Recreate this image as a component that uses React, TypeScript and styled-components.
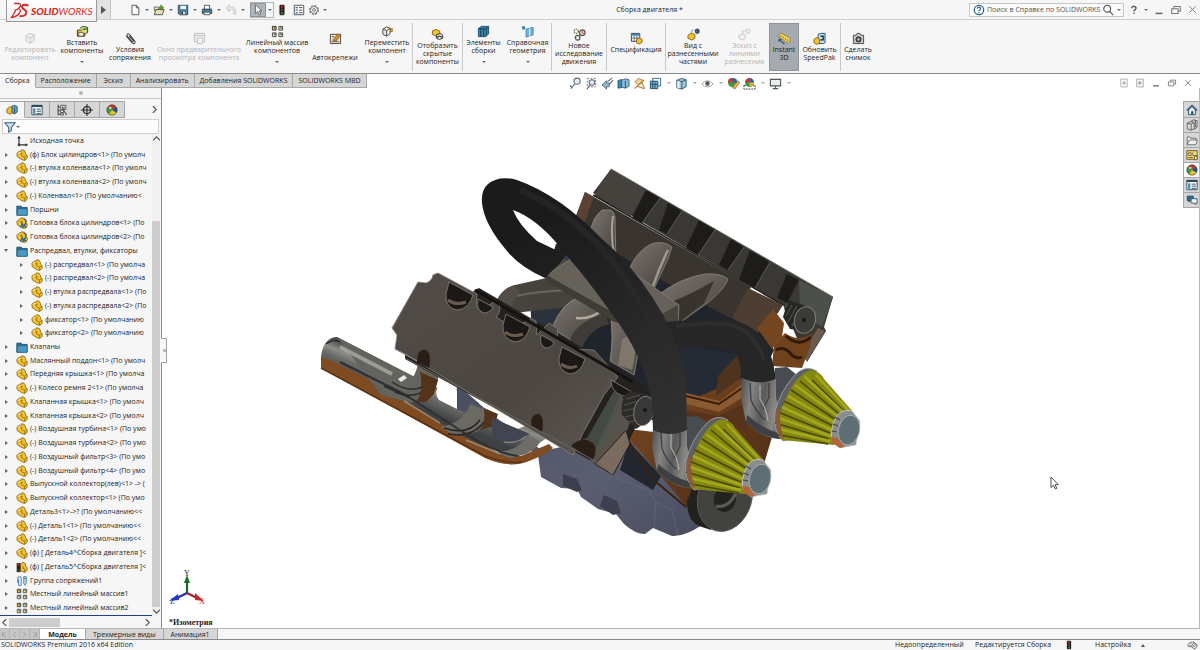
import React from 'react';
import styled, { createGlobalStyle } from 'styled-components';

const FONT = '"Open Sans", "Noto Sans", sans-serif';
const INK = '#1c1c1c';
const PANEL = '#f6f6f6';
const TAB = '#d6d6d6';
const LINE = '#a6a6a6';

const Global = createGlobalStyle`
  * { box-sizing: border-box; }
  body { margin: 0; font-family: ${FONT}; font-size: 7px; line-height: 8px; color: ${INK}; background: #fff; }
  button, input { font: inherit; color: inherit; margin: 0; padding: 0; border: 0; background: none; }
  svg { display: block; flex: none; }
`;

/* ---------- icons ---------- */

const Y = '#f2c230';
const YD = '#8a6410';
const B = '#3f86ad';
const BD = '#1d4f6e';

const glyphs: Record<string, React.ReactNode> = {
  newDoc: <path d="M3.5 1.5h5l3 3v8h-8zM8.5 1.5v3h3" fill="#fff" stroke="#444" />,
  open: (
    <>
      <path d="M1.500 3.500h4l1 1h5v3h-10z" fill="#f3ecc0" stroke="#555" />
      <path d="M1.500 12.500l2-6h9.500l-2 6z" fill="#e9e2b0" stroke="#444" />
      <path d="M6 6c0-2 1-3 3-3V1l3.500 3L9 7V5C8 5 7 5 6 6z" fill="#5aa02c" stroke="#2f6b12" strokeWidth=".5" />
    </>
  ),
  save: (
    <>
      <path d="M1.500 1.500h11v11h-9.500l-1.500-1.500z" fill={B} stroke="#26435a" />
      <path d="M4 2h6.500v4H4z" fill="#f4f4f4" />
      <path d="M4 8.500h6v4H4z" fill="#ddd" stroke="#333" strokeWidth=".6" />
      <path d="M5 9h2v3H5z" fill="#333" />
    </>
  ),
  print: (
    <>
      <path d="M4 1.500h6v5H4z" fill="#fff" stroke="#444" />
      <path d="M1.500 6h11v5h-11z" fill="#4b7f9e" stroke="#2c4050" />
      <path d="M3.500 9.500h7v3h-7z" fill="#fff" stroke="#444" />
    </>
  ),
  undo: <path d="M1 5l4-4v2.500h3c3 0 4.500 2 4.500 5.500V12h-2.500V9.500C10 7.500 9.500 6.500 8 6.500H5V9z" fill="#e4e4e4" stroke="#c8c8c8" />,
  cursor: <path d="M4 1v10l2.500-2.400 2 4.200 1.700-.8-2-4h3.300z" fill="#fff" stroke="#444" strokeWidth=".8" />,
  lights: (
    <>
      <rect x="4" y="1" width="6" height="12" rx="1.500" fill="#222" />
      <circle cx="7" cy="3.300" r="1.600" fill="#a3281c" />
      <circle cx="7" cy="7" r="1.600" fill="#6a3a16" />
      <circle cx="7" cy="10.700" r="1.600" fill="#2f6e30" />
    </>
  ),
  list: (
    <>
      <path d="M1.500 1.500h11v11h-11z" fill="#fff" stroke="#444" />
      <path d="M3 3.500h2.500v1.500H3zM3 6.500h2.500V8H3zM3 9.500h2.500V11H3z" fill="#2d5f87" />
      <path d="M7 4.200h4M7 7.200h4M7 10.200h4" stroke="#333" />
    </>
  ),
  gear: (
    <>
      <circle cx="7" cy="7" r="5" fill="none" stroke="#666" strokeWidth="1.600" strokeDasharray="2.400 1.500" />
      <circle cx="7" cy="7" r="4" fill="#fafafa" stroke="#666" strokeWidth=".8" />
      <circle cx="7" cy="7" r="1.700" fill="none" stroke="#666" />
    </>
  ),
  help: (
    <>
      <circle cx="7" cy="7" r="5.500" fill="#fff" stroke="#2d6388" strokeWidth="1.400" />
      <path d="M5.200 5.500c0-2.600 3.900-2.300 3.700 0C8.800 6.800 7 6.800 7 8.500M7 9.700v1.400" fill="none" stroke="#2d6388" strokeWidth="1.400" />
    </>
  ),
  search: <path d="M10 5.500a4 4 0 1 1-8 0 4 4 0 0 1 8 0zM9 8.500l4 4.500" fill="none" stroke="#555" strokeWidth="1.300" />,
  question: <path d="M4 4.500c0-3.600 6-3.400 5.800 0C9.600 6.500 7 6.500 7 9M7 10.700v2" fill="none" stroke="#555" strokeWidth="2" />,
  min: <path d="M3 11h8" stroke="#666" strokeWidth="1.800" />,
  restore: <path d="M2 5.500h7.500V11H2zM4.500 5V3h7.500v5.500h-2" fill="none" stroke="#777" strokeWidth="1.200" />,
  close: <path d="M3 3l8 8M11 3l-8 8" stroke="#777" strokeWidth="1.200" />,
  dockL: <path d="M2.500 1.500h9v11h-9zM5 7h5M5 7l3-2.500v5z" fill="none" stroke="#999" />,
  dockR: <path d="M2.500 1.500h9v11h-9zM4 7h5M9 7L6 4.500v5z" fill="none" stroke="#888" />,
  editPart: (
    <>
      <path d="M2 4l4-2.500 5 1.500v6l-4.500 3.500L2 9.500z" fill="#ececec" stroke="#c6c6c6" />
      <path d="M4 5.500l3 1 4-3M7 6.500v5.500" stroke="#c6c6c6" fill="none" />
    </>
  ),
  insertPart: (
    <>
      <path d="M1.500 5.500h8v6.500h-8z" fill={Y} stroke="#333" />
      <path d="M3 8h5v4H3z" fill="#fff6cc" stroke="#333" strokeWidth=".7" />
      <path d="M4 4l3-2.500 5.500 1V8L10 9.500" fill="#cfe08a" stroke="#333" />
      <path d="M7 4.500h5" stroke="#4d7a1c" strokeWidth="1.500" />
    </>
  ),
  clip: <path d="M2.500 4.500l6.500 7.500c1.800 1.600 4-.4 2.600-2.200L5.800 2.600C4.300 1 2.300 2.800 3.600 4.400l5 5.800c1 .8 2-.1 1.300-1.100L5.800 4.500" fill="none" stroke="#444" strokeWidth="1.100" />,
  preview: (
    <>
      <path d="M1.500 1.500h11v9h-11zM1.500 4h11" fill="#efefef" stroke="#bdbdbd" />
      <path d="M5 6.500h5v6H5z" fill="#f8f8f8" stroke="#bdbdbd" />
    </>
  ),
  pattern: (
    <>
      <path d="M1.500 1.500h4v4h-4z" fill={Y} stroke="#333" />
      <path d="M8.500 1.500h4v4h-4zM1.500 8.500h4v4h-4zM8.500 8.500h4v4h-4z" fill="#e6e3b4" stroke="#444" />
      <path d="M3.500 1.500v2h2M10.500 1.500v2h2M3.500 8.500v2h2M10.500 8.500v2h2" fill="none" stroke="#444" strokeWidth=".8" />
    </>
  ),
  fasteners: (
    <>
      <path d="M1.500 2.500h11v10h-11z" fill="#eee2cf" stroke="#444" />
      <path d="M4 9l5.500-7 3 1.500L8 9.500z" fill="#d98d2d" stroke="#7a4a12" strokeWidth=".7" />
      <path d="M3 10.500h8M3 5h2.500" stroke="#555" />
    </>
  ),
  move: (
    <>
      <path d="M2 4.500l4-2.500 4 1.500V9l-4 3-4-2z" fill="#f1ebdc" stroke="#444" />
      <path d="M2 4.500l4 1.500 4-2.500M6 6v6" fill="none" stroke="#444" />
      <path d="M8 5c2-2 4-1 4 2M12 3.500V7H9" fill="none" stroke="#a5761d" strokeWidth="1.200" />
    </>
  ),
  showHidden: (
    <>
      <path d="M1.500 3l4-1.500 4 2v3l-4 2.500-4-2z" fill={Y} stroke={YD} />
      <path d="M6 7l4-1 2.500 1.500v3.500L9 12.500 6 11z" fill="#d9d9d9" stroke="#333" />
      <path d="M6 10.500c2-2 4.500-2 6.500 0" fill="none" stroke="#111" />
    </>
  ),
  features: (
    <>
      <path d="M1.500 4l3-2.500h8v8l-3 3h-8z" fill={B} stroke={BD} />
      <path d="M4 4.500v8M7 4.500v8M10 4v8M1.500 4h8l3-2.500" fill="none" stroke="#123950" />
    </>
  ),
  refGeom: (
    <>
      <path d="M5.500 4.500l7.500-2v8l-7.500 2.500z" fill="#76b4d6" stroke={B} />
      <path d="M9.300 3.500v8.500" stroke="#fff" />
      <circle cx="2.800" cy="3" r="2" fill={B} />
    </>
  ),
  motion: (
    <>
      <circle cx="3.500" cy="3.500" r="2.300" fill="none" stroke="#775" strokeWidth="1.300" strokeDasharray="1.500 .8" />
      <circle cx="10" cy="5" r="3" fill="#f1d9c0" stroke="#555" strokeWidth="1.300" />
      <circle cx="5" cy="10.500" r="2.500" fill="#f4f4f4" stroke="#555" strokeWidth="1.300" />
      <path d="M10 3v2l1.500 1" fill="none" stroke="#a33" />
    </>
  ),
  bom: (
    <>
      <path d="M1.500 1.500h9v8.500h-9z" fill="#fff" stroke="#335" />
      <path d="M1.500 2h9v2h-9z" fill={B} />
      <path d="M1.500 6.500h9M4.500 4v6M7.500 4v6" stroke="#567" />
      <path d="M7 8l3-1.500 3 1.500v3l-3 2-3-1.500z" fill={Y} stroke={YD} />
    </>
  ),
  explode: (
    <>
      <path d="M1 8l3.500-2.500L8.500 7v4l-3.500 2-4-2z" fill={Y} stroke={YD} />
      <path d="M9 2l2-1 2 1v3l-2 1-2-1z" fill="#44638c" stroke="#223" strokeWidth=".8" />
      <path d="M5 5V2.500h3" fill="none" stroke="#777" strokeDasharray="1.500 1" />
    </>
  ),
  explodeLine: (
    <>
      <path d="M1 8l3.500-2L8 7.500V11l-3 2-4-2z" fill="#eee" stroke="#c8c8c8" />
      <path d="M9 2l2-1 2 1v3l-2 1-2-1zM5 6V3h3" fill="#eee" stroke="#c8c8c8" />
    </>
  ),
  instant3d: (
    <>
      <path d="M1 2.500L3 1l10 5.500v4L11 12 1 5.500z" fill="#f3d45c" stroke="#7f6a1a" strokeWidth=".7" />
      <path d="M3 3.500v2M5.500 5v2M8 6.500v2M10.500 8v2" stroke="#7f6a1a" />
      <path d="M1 8l6 5M1 8v2.500M1 8h2.500" stroke="#1f5d80" strokeWidth="1.300" fill="none" />
    </>
  ),
  speedpak: (
    <>
      <path d="M5.500 2.500L8 1.500h5v10l-2 1H5.500z" fill="#c3dbe8" stroke={BD} />
      <path d="M8 4.500h3v4H8" fill="none" stroke="#123" strokeWidth="1.300" />
      <path d="M1 8l3-2 3 2v3.500l-3 2-3-2z" fill={Y} stroke={YD} />
    </>
  ),
  camera: (
    <>
      <path d="M1.500 3.500h3l1-2h3l1 2h3v9h-11z" fill="#c9c9c9" stroke="#444" />
      <circle cx="7" cy="8" r="2.800" fill="#666" stroke="#222" />
      <circle cx="7" cy="8" r="1.100" fill="#ddd" />
    </>
  ),
  zoomFit: <path d="M12 4.500a3.300 3.300 0 1 1-6.600 0 3.300 3.300 0 0 1 6.600 0zM6.500 7L2 12.500M1 9l2.500 3" fill="#e4f0f6" stroke="#567" strokeWidth="1.100" />,
  zoomArea: (
    <>
      <path d="M2.500 1.500h9v9h-9z" fill="none" stroke="#777" strokeDasharray="2 1.500" />
      <path d="M10.500 6a3 3 0 1 1-6 0 3 3 0 0 1 6 0zM5.500 8.500L2 13" fill="#dceaf2" stroke="#667" strokeWidth="1.100" />
    </>
  ),
  prevView: (
    <>
      <path d="M1 8.500L6 4v2.500h3v4H6V13z" fill="#8fb8cc" stroke="#456" strokeWidth=".8" />
      <path d="M7 5l5-4M9 8l4-5" stroke="#667" strokeWidth="1.200" />
    </>
  ),
  section: (
    <>
      <path d="M1 4l4-1.500v9L1 12z" fill={B} stroke={BD} strokeWidth=".8" />
      <path d="M5 3.500l4-1.500 4 1v7l-4 2-4-1z" fill="#8bbdd6" stroke={BD} strokeWidth=".8" />
      <path d="M9 4v8" stroke={BD} />
    </>
  ),
  dynView: (
    <>
      <path d="M2 5l4-3.500 4 1.500v3L6 9z" fill="#efcf91" stroke="#a0711f" strokeWidth=".8" />
      <path d="M1.500 12.500L12 3M9 5l3.500 7.500M4 10l8 2.500" stroke="#b27a2a" strokeWidth="1.100" fill="none" />
    </>
  ),
  orient: (
    <>
      <path d="M1.500 4.500h8v8h-8z" fill="#76aecb" stroke={BD} />
      <path d="M4 4.500v-3h8.500v8h-3M4 4.500v8M6.500 4.500v8M1.500 8h8" fill="none" stroke={BD} strokeWidth=".9" />
    </>
  ),
  style: (
    <>
      <path d="M2 3.500l5-2 5 1.500v7.500L7.500 13 2 11.500z" fill="#9cc9df" stroke="#356" />
      <path d="M2 3.500l5.500 1.500L12 3M7.500 5v8" fill="none" stroke="#356" />
      <path d="M2.500 4l2.500.7v7.500l-2.500-.7z" fill="#e6f2f8" />
    </>
  ),
  eye: (
    <>
      <path d="M1 7.500c3-4.500 9-4.500 12 0-3 4-9 4-12 0z" fill="#fff" stroke="#999" />
      <circle cx="7" cy="7" r="2.400" fill="#555" />
    </>
  ),
  appearance: (
    <>
      <circle cx="6" cy="6" r="5" fill="#3a9a48" />
      <path d="M6 6V1a5 5 0 0 1 5 5z" fill="#2f62ae" />
      <path d="M6 6H1a5 5 0 0 1 5-5z" fill="#c9382e" />
      <path d="M7 9l5-5 1.500 2L9 12.500 6.500 12z" fill="#e7b04a" stroke="#8a5a14" strokeWidth=".7" />
    </>
  ),
  scene: (
    <>
      <path d="M1 9h12v4H1z" fill="#fff" stroke="#333" strokeDasharray="2 1" />
      <circle cx="7" cy="6" r="4.800" fill="#3a9a48" />
      <path d="M7 6V1.200A4.800 4.800 0 0 1 11.800 6z" fill="#2f62ae" />
      <path d="M7 6H2.200A4.800 4.800 0 0 1 7 1.200z" fill="#c9382e" />
      <path d="M7 6h4.800A4.800 4.800 0 0 1 7 10.800z" fill="#e0a92d" />
    </>
  ),
  monitor: (
    <>
      <path d="M1.500 2.500h11v7h-11z" fill="#e9eef0" stroke="#555" strokeWidth="1.200" />
      <path d="M7 10v2M4 12.500h6" stroke="#555" strokeWidth="1.200" />
    </>
  ),
  tree: (
    <>
      <path d="M1 6l4-3 4 2v4l-4 3-4-2z" fill={Y} stroke={YD} />
      <path d="M7 2.500l3-1 3 1.500v6.500l-3 2-3-1.500z" fill="#6ba4be" stroke={BD} />
      <path d="M10 4v7" stroke={BD} />
    </>
  ),
  propList: (
    <>
      <path d="M1 1.500h12v11H1z" fill="#f8fbfd" stroke="#245" />
      <path d="M1 1.500h12v2H1z" fill="#245" />
      <path d="M2.500 5H5v6.500H2.500z" fill={B} />
      <path d="M6.500 6h5M6.500 8.500h5M6.500 11h5" stroke="#245" />
    </>
  ),
  config: (
    <>
      <path d="M2.500 1v12M2.500 3.500H5M2.500 8H5M2.500 12H5" stroke="#444" fill="none" strokeWidth="1.200" />
      <path d="M5.500 1.500h6v5h-6zM5.500 7h3v3h-3zM5.500 10.500h3v2.500h-3z" fill="#fff" stroke="#444" />
      <path d="M8.500 7l4 5.500M7.500 3v2h2V3" fill="none" stroke="#444" strokeWidth="1.200" />
    </>
  ),
  target: (
    <>
      <circle cx="7" cy="7" r="4.200" fill="none" stroke="#222" strokeWidth="1.200" />
      <path d="M7 0v14M0 7h14" stroke="#222" strokeWidth="1.200" />
    </>
  ),
  ball: (
    <>
      <circle cx="7" cy="7" r="6" fill="#e6c32e" />
      <path d="M7 7L2.500 3A6 6 0 0 1 11 2.500z" fill="#c8352c" />
      <path d="M7 7l4-4.500A6 6 0 0 1 12 10z" fill="#2a4f93" />
      <path d="M7 7L2.500 3a6 6 0 0 0 1 9z" fill="#3e9a3a" />
      <circle cx="7" cy="7" r="6" fill="none" stroke="#333" strokeWidth=".7" />
      <circle cx="5" cy="4.500" r="1.400" fill="#fff" opacity=".75" />
    </>
  ),
  funnel: <path d="M1 2h12L8.500 7.500V11L5.500 13V7.500z" fill="#cfe3ee" stroke="#2f5f80" strokeWidth="1.200" />,
  origin: (
    <>
      <path d="M3.500 2v9.500H13" fill="none" stroke="#333" strokeWidth="1.400" />
      <path d="M1.500 4l2-3 2 3zM11 9.500l3 2-3 2z" fill="#333" />
      <circle cx="3.500" cy="11.500" r="1.500" fill="#333" />
    </>
  ),
  part: (
    <>
      <path d="M1 5l3-2.500 1.500.5 1-2 3 .5L11 4v2l2 1.500v3.500L10 13.500 6 12 1.500 9z" fill={Y} stroke={YD} />
      <path d="M4.500 6L7 4.500 6.500 8 10 9.500V13M10 9.500l2.500-2" fill="none" stroke={YD} strokeWidth=".9" />
      <path d="M2 5.500L4.500 4l1 .5" stroke="#fdf0b0" fill="none" />
    </>
  ),
  subasm: (
    <>
      <path d="M1 5l3-2.500L6.500 1l3 .5L11 4v2l2 1.500v3.500L10 13.500 6 12 1.500 9z" fill={Y} stroke={YD} />
      <path d="M4.500 6L7 4.500 6.500 8" fill="none" stroke={YD} />
      <path d="M9 2l3 2-1 4" fill="none" stroke="#555" strokeWidth="1.400" />
      <path d="M5 12l2.500-4 1 2.500 3-3M7 13l3-3 2 3" fill="none" stroke="#2b618f" strokeWidth="1.500" />
    </>
  ),
  folder: (
    <>
      <path d="M1 2.500h5l1.500 1.500H13v9H1z" fill="#2c6f96" stroke="#174a68" />
      <path d="M2 5.500h11v7.500H1z" fill="#4a9cc6" stroke="#1d5a7c" strokeWidth=".7" />
    </>
  ),
  partLight: (
    <>
      <path d="M5 4l3-2.500L11 3v3l2 1.500V11l-3 2.500L5 11z" fill={Y} stroke={YD} />
      <path d="M8.500 6L8 8.500l2 1V13" fill="none" stroke={YD} />
      <path d="M.8 2.500h4.400v10.500H.8z" fill="#2a1f16" />
      <circle cx="3" cy="4.700" r="1.200" fill="#b0382a" />
      <circle cx="3" cy="10.700" r="1.200" fill="#3b6b38" />
    </>
  ),
  mates: (
    <>
      <path d="M2 9V4a2 2 0 0 1 4 0v7a1.500 1.500 0 0 1-3 0V5" fill="none" stroke="#4a87b0" strokeWidth="1.200" />
      <path d="M9 4h3v5l-1.500 3L9 10zM9 4V2h3v2" fill="#b9d6e6" stroke="#4a87b0" strokeWidth="1.100" />
    </>
  ),
  house: (
    <>
      <path d="M1 7.500L7 1.500l6 6" fill="none" stroke="#234c6c" strokeWidth="1.500" />
      <path d="M3 7v5.500h8V7L7 3z" fill="#e3eef5" stroke="#234c6c" />
      <path d="M6 8.500h2.500v4H6z" fill="#234c6c" />
    </>
  ),
  library: (
    <>
      <path d="M1.500 5l4-2 4 1v7.500l-3.500 1.500-4.500-1.500z" fill="#dcdcdc" stroke="#555" />
      <path d="M5.500 3l3-2 4.500 1v7.500l-3.500 2.500M1.500 5l4.500 1 3.500-2M6 6v7M11 1.500v8" fill="none" stroke="#555" />
    </>
  ),
  folderOpen: <path d="M1.500 12.500V3.500h3l1 1.500h6v2h2l-2 5.500zM1.500 12.500L4 7h8" fill="#efefef" stroke="#666" />,
  palette: (
    <>
      <path d="M1 2h12v10H1z" fill="#f3dc72" stroke="#5e4e10" />
      <path d="M3 4.500h3v3H3zM8 4v3.500h4M3 10h5M10 8.500h3v4h-3z" fill="#fff" stroke="#5e4e10" />
    </>
  ),
  forum: (
    <>
      <path d="M1.500 2.500h7v5H5l-1.500 2v-2h-2z" fill="#2f6b92" stroke="#1d4460" />
      <path d="M6 5.500h7v5h-1.500v2l-2-2H6z" fill="#e9f1f6" stroke="#2f556e" />
    </>
  ),
  tag: <path d="M1 6c2-3 5-4 8-3l4 3c0 3-2 5-4 5.500L6 8.500H2zM4 6l3 3M6 5l4 3.500M8.500 4l3 3" fill="#e2e2e2" stroke="#555" />,
};

const Icon = ({ name, size = 12 }: { name: string; size?: number }) => (
  <svg width={size} height={size} viewBox="0 0 14 14" aria-hidden="true">
    {glyphs[name]}
  </svg>
);

const Caret = styled.span<{ $w?: number; $pale?: boolean }>`
  width: ${(p) => p.$w ?? 10}px;
  display: flex;
  justify-content: center;
  &::after {
    content: '';
    border: 2px solid transparent;
    border-top-color: ${(p) => (p.$pale ? '#a4a4a4' : '#6a6a6a')};
    border-bottom: 0;
  }
`;

/* ---------- frame ---------- */

const Frame = styled.div`
  min-height: 100vh;
  display: flex;
  flex-direction: column;
  background: ${PANEL};
`;

const TitleBar = styled.header`
  height: 20px;
  display: flex;
  align-items: stretch;
  border-bottom: 1px solid #cfcfcf;
`;

const Brand = styled.div`
  position: relative;
  z-index: 2;
  width: 91px;
  height: 22px;
  margin-left: 6px;
  padding-left: 3px;
  display: flex;
  align-items: center;
  gap: 1px;
  background: linear-gradient(#ffffff, #f0f0f0);
  border: 1px solid #999;
  border-top: 0;
  color: #d22a26;
  font: italic 10px/12px Lato, sans-serif;
  b { font-weight: 900; }
`;

const BrandArrow = styled.button`
  width: 14px;
  display: flex;
  align-items: center;
  justify-content: center;
  background: #e2e2e2;
  border-right: 1px solid #c4c4c4;
`;

const QuickAccess = styled.div`
  display: flex;
  align-items: center;
  padding: 1px 0 0 17px;
`;

const ToolButton = styled.button<{ $w?: number; $active?: boolean }>`
  width: ${(p) => p.$w ?? 14}px;
  height: 14px;
  display: flex;
  align-items: center;
  justify-content: center;
  ${(p) => p.$active && 'background: #aeb4ba; border: 1px solid #8f9599;'}
`;

const SelectGroup = styled.div`
  display: flex;
  align-items: center;
  margin: 0 1px 0 2px;
  border: 1px solid #b4b8bb;
  border-width: 1px 1px 1px 0;
`;

const DocTitle = styled.h1`
  flex: 1;
  margin: 0;
  align-self: center;
  text-align: center;
  font-size: 7px;
  font-weight: 400;
`;

const SearchBox = styled.label`
  align-self: center;
  width: 155px;
  height: 14px;
  margin-right: 2px;
  padding-left: 3px;
  display: flex;
  align-items: center;
  gap: 1px;
  background: #fbfbfb;
  border: 1px solid #c6c6c6;
  input {
    flex: 1;
    min-width: 0;
    padding-left: 1px;
    outline: 0;
    &::placeholder { color: #555; opacity: 1; }
  }
`;

const WindowButtons = styled.div`
  display: flex;
  align-items: center;
`;

/* ---------- ribbon ---------- */

const Ribbon = styled.div`
  height: 54px;
  display: flex;
  padding: 3px 0 2px 4px;
  border-bottom: 1px solid #8a8a8a;
`;

const Command = styled.button<{ $w: number; $on?: boolean; $off?: boolean }>`
  width: ${(p) => p.$w}px;
  display: flex;
  flex-direction: column;
  align-items: center;
  justify-content: center;
  text-align: center;
  white-space: pre;
  color: ${(p) => (p.$off ? '#b4b4b4' : INK)};
  ${(p) => p.$on && 'background: #a5abb1; border: 1px solid #8d9397;'}
  > svg { margin-bottom: 1px; }
`;

const CommandCaret = styled.span`
  height: 15px;
  display: flex;
  align-items: center;
  &::after {
    content: '';
    border: 2px solid transparent;
    border-top-color: #6a6a6a;
    border-bottom: 0;
  }
`;

const Divider = styled.i`
  width: 1px;
  background: #c9c9c9;
`;

type Cmd = { label: string; icon: string; w: number; menu?: boolean; off?: boolean; on?: boolean; end?: boolean };

const commands: Cmd[] = [
  { label: 'Редактировать\nкомпонент', icon: 'editPart', w: 52, off: true },
  { label: 'Вставить\nкомпоненты', icon: 'insertPart', w: 52, menu: true },
  { label: 'Условия\nсопряжения', icon: 'clip', w: 44 },
  { label: 'Окно предварительного\nпросмотра компонента', icon: 'preview', w: 94, off: true },
  { label: 'Линейный массив\nкомпонентов', icon: 'pattern', w: 62, menu: true },
  { label: ' \nАвтокрепежи', icon: 'fasteners', w: 54 },
  { label: 'Переместить\nкомпонент', icon: 'move', w: 50, menu: true, end: true },
  { label: 'Отобразить\nскрытые\nкомпоненты', icon: 'showHidden', w: 49, end: true },
  { label: 'Элементы\nсборки', icon: 'features', w: 41, menu: true },
  { label: 'Справочная\nгеометрия', icon: 'refGeom', w: 47, menu: true, end: true },
  { label: 'Новое\nисследование\nдвижения', icon: 'motion', w: 54, end: true },
  { label: 'Спецификация\n ', icon: 'bom', w: 58, end: true },
  { label: 'Вид с\nразнесенными\nчастями', icon: 'explode', w: 54 },
  { label: 'Эскиз с\nлиниями\nразнесения', icon: 'explodeLine', w: 49, off: true },
  { label: 'Instant\n3D', icon: 'instant3d', w: 30, on: true },
  { label: 'Обновить\nSpeedPak', icon: 'speedpak', w: 41, end: true },
  { label: 'Сделать\nснимок', icon: 'camera', w: 34 },
];

/* ---------- tabs and view toolbar ---------- */

const TabRow = styled.div`
  position: relative;
  z-index: 1;
  height: 14px;
  display: flex;
  align-items: stretch;
  background: #fff;
`;

const RibbonTab = styled.button<{ $active?: boolean }>`
  min-width: 34px;
  padding: 0 5px;
  background: ${(p) => (p.$active ? PANEL : TAB)};
  border-right: 1px solid ${LINE};
  border-bottom: 1px solid ${(p) => (p.$active ? PANEL : LINE)};
`;

const ViewTools = styled.div`
  display: flex;
  align-items: center;
  padding: 4px 0 0 201px;
  margin-right: auto;
`;

const DocButtons = styled.div`
  display: flex;
  align-items: center;
  padding: 4px 4px 0 0;
`;

const Body = styled.div`
  flex: 1;
  display: flex;
  min-height: 0;
`;

/* ---------- feature manager ---------- */

const Side = styled.aside`
  position: relative;
  width: 162px;
  display: flex;
  flex-direction: column;
  border-right: 1px solid #8c8c8c;
`;

const Grip = styled.div`
  height: 11px;
  display: flex;
  align-items: center;
  justify-content: center;
  border-bottom: 1px solid #c4c4c4;
  &::after {
    content: '';
    width: 4px;
    height: 4px;
    border-radius: 2px;
    background: #b4b4b4;
  }
`;

const PaneTabs = styled.div`
  display: flex;
  height: 17px;
  margin-top: 2px;
  align-items: stretch;
`;

const PaneTab = styled.button<{ $active?: boolean }>`
  width: 25px;
  display: flex;
  align-items: center;
  justify-content: center;
  background: ${(p) => (p.$active ? PANEL : TAB)};
  border: 1px solid ${LINE};
  border-width: 1px 1px 1px 0;
  ${(p) => p.$active && `border-bottom-color: ${PANEL};`}
`;

const PaneMore = styled.button`
  margin-left: auto;
  width: 14px;
  display: flex;
  align-items: center;
  justify-content: center;
`;

const FilterBar = styled.div`
  height: 15px;
  margin: 1px 2px 0;
  padding-left: 1px;
  display: flex;
  align-items: center;
  background: #fcfcfc;
  border: 1px solid #d0d0d0;
`;

const TreeArea = styled.div`
  flex: 1;
  display: flex;
  min-height: 0;
`;

const Tree = styled.ul`
  flex: 1;
  min-width: 0;
  margin: 0;
  padding: 0;
  list-style: none;
  display: grid;
  grid-auto-rows: 1fr;
  border-bottom: 1px solid #1f3f86;
`;

const Node = styled.li<{ $depth: number }>`
  display: flex;
  align-items: center;
  overflow: hidden;
  white-space: nowrap;
  padding-left: ${(p) => p.$depth * 15 + 2}px;
`;

const Toggle = styled.button<{ $open?: boolean }>`
  width: 8px;
  height: 8px;
  margin-right: 6px;
  flex: none;
  display: flex;
  align-items: center;
  justify-content: center;
  &::after {
    content: '';
    border: 2px solid transparent;
    border-width: ${(p) => (p.$open ? '3px 2px 0' : '2px 0 2px 3px')};
    border-${(p) => (p.$open ? 'top' : 'left')}-color: #666;
  }
`;

const NoToggle = styled.span`
  width: 14px;
  flex: none;
`;

const NodeText = styled.span`
  margin-left: 2px;
`;

const VScroll = styled.div`
  width: 8px;
  margin-right: 1px;
  display: flex;
  flex-direction: column;
  background: #f0f0f0;
`;

const ScrollButton = styled.button`
  width: 9px;
  height: 9px;
  flex: none;
  display: flex;
  align-items: center;
  justify-content: center;
`;

const VTrack = styled.div`
  flex: 1;
  display: flex;
  flex-direction: column;
  &::before { content: ''; flex: 78; }
  &::after { content: ''; flex: 386; background: #cdcdcd; }
`;

const HScroll = styled.div`
  height: 12px;
  margin-right: 9px;
  display: flex;
  align-items: center;
`;

const HTrack = styled.div`
  flex: 1;
  height: 9px;
  &::before { content: ''; display: block; width: 38%; height: 100%; background: #cdcdcd; }
`;

const Collapse = styled.button`
  position: absolute;
  z-index: 2;
  top: 250px;
  right: -6px;
  width: 6px;
  height: 25px;
  background: ${PANEL};
  border: 1px solid #a0a0a0;
  border-left-color: ${PANEL};
  display: flex;
  align-items: center;
  justify-content: center;
  &::after {
    content: '';
    width: 3px;
    height: 3px;
    border-radius: 2px;
    background: #aaa;
  }
`;

type Row = { t: string; i?: string; d?: number; open?: boolean; leaf?: boolean };

const rows: Row[] = [
  { t: 'Исходная точка', i: 'origin', leaf: true },
  { t: '(ф) Блок цилиндров<1> (По умолч' },
  { t: '(-) втулка коленвала<1> (По умолч' },
  { t: '(-) втулка коленвала<2> (По умолч' },
  { t: '(-) Коленвал<1> (По умолчанию<' },
  { t: 'Поршни', i: 'folder' },
  { t: 'Головка блока цилиндров<1> (По', i: 'subasm' },
  { t: 'Головка блока цилиндров<2> (По', i: 'subasm' },
  { t: 'Распредвал, втулки, фиксаторы', i: 'folder', open: true },
  { t: '(-) распредвал<1> (По умолча', d: 1 },
  { t: '(-) распредвал<2> (По умолча', d: 1 },
  { t: '(-) втулка распредвала<1> (По', d: 1 },
  { t: '(-) втулка распредвала<2> (По', d: 1 },
  { t: 'фиксатор<1> (По умолчанию', d: 1 },
  { t: 'фиксатор<2> (По умолчанию', d: 1 },
  { t: 'Клапаны', i: 'folder' },
  { t: 'Маслянный поддон<1> (По умолч' },
  { t: 'Передняя крышка<1> (По умолча' },
  { t: '(-) Колесо ремня 2<1> (По умолча' },
  { t: 'Клапанная крышка<1> (По умолч' },
  { t: 'Клапанная крышка<2> (По умолч' },
  { t: '(-) Воздушная турбина<1> (По умо' },
  { t: '(-) Воздушная турбина<2> (По умо' },
  { t: '(-) Воздушный фильтр<3> (По умо' },
  { t: '(-) Воздушный фильтр<4> (По умо' },
  { t: 'Выпускной коллектор(лев)<1> -> (' },
  { t: 'Выпускной коллектор<1> (По умо' },
  { t: 'Деталь3<1>->? (По умолчанию<<' },
  { t: '(-) Деталь1<1> (По умолчанию<<' },
  { t: '(-) Деталь1<2> (По умолчанию<<' },
  { t: '(ф) [ Деталь4^Сборка двигателя ]<' },
  { t: '(ф) [ Деталь5^Сборка двигателя ]<', i: 'partLight' },
  { t: 'Группа сопряжений1', i: 'mates' },
  { t: 'Местный линейный массив1', i: 'pattern' },
  { t: 'Местный линейный массив2', i: 'pattern' },
];

/* ---------- viewport ---------- */

const Viewport = styled.main`
  position: relative;
  flex: 1;
  min-width: 0;
  display: flex;
  flex-direction: column;
  justify-content: flex-end;
  background: #fff;
  border-right: 1px solid #b8b8b8;
`;

const Scene = styled.svg`
  position: absolute;
  inset: 0;
  width: 100%;
  height: 100%;
`;

const ViewName = styled.div`
  position: relative;
  padding: 0 0 1px 7px;
  font: bold 8px/9px 'Liberation Serif', serif;
`;

const TaskPane = styled.nav`
  position: absolute;
  top: 13px;
  right: 0;
  border: 1px solid ${LINE};
  border-right: 0;
`;

const TaskButton = styled.button<{ $active?: boolean }>`
  width: 15px;
  height: 15px;
  display: flex;
  align-items: center;
  justify-content: center;
  background: ${(p) => (p.$active ? '#fff' : TAB)};
  & + & { border-top: 1px solid ${LINE}; }
`;

/* ---------- bottom ---------- */

const SheetRow = styled.div`
  height: 11px;
  display: flex;
  align-items: stretch;
  border-top: 1px solid #b5b5b5;
`;

const SheetNav = styled.button`
  width: 10px;
  background: #c6c6c6;
  border-right: 1px solid #b4b4b4;
  display: flex;
  align-items: center;
  justify-content: center;
`;

const SheetTab = styled.button<{ $active?: boolean }>`
  min-width: 46px;
  padding: 0 7px;
  line-height: 9px;
  background: ${(p) => (p.$active ? '#fff' : TAB)};
  font-weight: ${(p) => (p.$active ? 700 : 400)};
  border-right: 1px solid ${LINE};
`;

const StatusBar = styled.footer`
  height: 11px;
  display: flex;
  align-items: center;
  border-top: 1px solid #8a8a8a;
  padding: 0 2px 0 1px;
`;

const StatusCell = styled.span<{ $w: number }>`
  width: ${(p) => p.$w}px;
  display: flex;
  align-items: center;
  &:first-child { margin-right: auto; }
`;

/* ---------- engine drawing ---------- */

const ribs: [number, number, number, number][] = [
  [727, 424, 762, 462], [715, 425, 757, 464], [706, 434, 751, 467], [699, 445, 746, 472],
  [693, 456, 743, 479], [690, 467, 742, 485], [690, 478, 741, 490],
];

const Turbo = () => (
  <g>
    <path d="M686 417l12-1 10 8-6 25-16 8z" fill="#484b50" />
    <path d="M653 427q17 8 34 1v18q2 14 14 20l-4 22q-22 2-40-17l-5-24z" fill="url(#metal)" />
    <path d="M661 432l1 17q5 12 14 20M680 432v14l-6 12" stroke="#3c3e42" strokeWidth="1.300" fill="none" />
    <path d="M657 471q18 18 40 17l3-5q-20 0-42-19z" fill="#3d3f43" />
    <path d="M671 434v14q6 8 8 22" stroke="#b9b9b7" strokeWidth="1" fill="none" />
  </g>
);

const AirFilter = () => (
  <g>
    <path d="M728 420q-12-7-22 4-15 16-20 37-2 20 8 29l6-1z" fill="#5d6064" stroke="#a7a9aa" strokeWidth=".8" />
    <path d="M722 419q10 2 13 9l30 34-20 32-52-5q-8-10-1-29 12-36 30-41z" fill="#85880f" />
    {ribs.map(([a, b, c, d]) => (
      <g key={b}>
        <path d={`M${a} ${b}L${c} ${d}`} stroke="#a5a81f" strokeWidth="2.500" />
        <path d={`M${a - 4} ${b + 5}L${c - 2} ${d + 3}`} stroke="#45480a" strokeWidth="1.600" />
      </g>
    ))}
    <path d="M688 456q-4 18 3 30l4 2q-5-14-4-30z" fill="#8c5a38" />
    <path d="M763 460q-12-3-17 8-5 12-3 22l8 7 16-3 4-24z" fill="#8a8d8e" stroke="#d0d0d0" strokeWidth=".8" />
    <path d="M742 486l1 6 8 5 4-1-6-9z" fill="#b0663a" />
    <path d="M746 466l5 3M744 473l5 2M743 480l5 1" stroke="#444" strokeWidth="1.200" />
    <ellipse cx="760" cy="479" rx="10.500" ry="15" transform="rotate(14 760 479)" fill="#5f6e74" stroke="#a9b0b2" strokeWidth=".8" />
  </g>
);

const Engine = () => (
  <g strokeLinejoin="round">
    <defs>
      <linearGradient id="metal" x1="0" x2="1" y1="0" y2=".2">
        <stop offset="0" stopColor="#4b4c4e" />
        <stop offset=".25" stopColor="#858482" />
        <stop offset=".5" stopColor="#5a5a5b" />
        <stop offset=".75" stopColor="#8c8884" />
        <stop offset="1" stopColor="#45464a" />
      </linearGradient>
      <linearGradient id="tube" gradientUnits="userSpaceOnUse" x1="372" y1="355" x2="360" y2="383">
        <stop offset="0" stopColor="#4a4b49" />
        <stop offset=".3" stopColor="#8d8e86" />
        <stop offset=".5" stopColor="#6c6d69" />
        <stop offset="1" stopColor="#3e4043" />
      </linearGradient>
      <linearGradient id="cover" x1="0" y1="0" x2="1" y2="1">
        <stop offset="0" stopColor="#514c47" />
        <stop offset=".6" stopColor="#4b4641" />
        <stop offset="1" stopColor="#5c5751" />
      </linearGradient>
      <linearGradient id="pan" x1="0" y1="0" x2="1" y2="1">
        <stop offset="0" stopColor="#4c4f60" />
        <stop offset=".6" stopColor="#5b5e71" />
        <stop offset="1" stopColor="#4a4d5e" />
      </linearGradient>
      <linearGradient id="hose" gradientUnits="userSpaceOnUse" x1="560" y1="215" x2="690" y2="420">
        <stop offset="0" stopColor="#1b1b1b" />
        <stop offset=".6" stopColor="#292929" />
        <stop offset="1" stopColor="#313131" />
      </linearGradient>
      <linearGradient id="runner" x1="0" y1="0" x2="1" y2="1">
        <stop offset="0" stopColor="#7b766f" />
        <stop offset=".5" stopColor="#605b54" />
        <stop offset="1" stopColor="#47433e" />
      </linearGradient>
      <linearGradient id="bronze" x1="0" y1="0" x2="1" y2="1">
        <stop offset="0" stopColor="#7c4b24" />
        <stop offset="1" stopColor="#4a2a14" />
      </linearGradient>
    </defs>

    {/* oil pan */}
    <path d="M457 384l34 30 52 37 90-20 60 60 9 34q-18 12-30 11l-19-8-8 6q-10 0-21-10l-8-10-18-5-17-12-4-8-16-1-20-11-3-22-82-50z" fill="url(#pan)" />
    <path d="M563 474l14 5 5 11-5 2-14-6zM604 495l13 6 4 12-8 2-13-9z" fill="#3c3f4e" />
    <path d="M616 478l32 12 8 12-2 26M656 502l16 8 6 25" stroke="#6d7188" strokeWidth="1" fill="none" opacity=".5" />
    <path d="M620 470l33 20 8-14-32-34z" fill="#22262e" />

    {/* dark engine bay */}
    <path d="M556 244l40-20 150 82 28 44-22 46-70 34-60-20-90-90z" fill="#20242b" />
    <path d="M556 256l10-9 10 8-6 6z" fill="#3a3e55" />
    <path d="M680 345l60 10 6 32-60 18z" fill="#252b35" />
    <path d="M530 300l32 8 20 32-50-8z" fill="#2c323d" />

    {/* rear bank */}
    <path d="M585 192l166 95-18 32-34-17-98-58-28-20z" fill="#3a342f" />
    <path d="M585 192l9 5-12 32-9-5z" fill="#5b4233" />
    <path d="M611 169l222 128-9 30 2 4-19 31-24-57-190-112z" fill="#3a3834" />
    <path d="M611 169l35 20-15 27-37-20z" fill="#45423d" />
    <path d="M646 190l14 8-18 25-10-5zM668 203l14 8-15 23-8-4zM699 220l16 10-17 25-12-7zM731 239l13 8-16 23-9-5zM750 250l20 12-15 26-16-8zM787 274l12 6-12 23-10-5z" fill="#1d1c1a" />
    <path d="M660 198l-18 25M682 211l-15 23M715 230l-17 25M744 247l-16 23M770 262l-15 26" stroke="#6a6862" strokeWidth=".8" />
    <path d="M799 280l34 17-11 30-22-14z" fill="#4b504b" />
    <path d="M611 169l222 128" stroke="#6e6b66" strokeWidth="1" />
    <path d="M593 195l190 110" stroke="#23211f" strokeWidth="1.500" />
    <path d="M818 328l7 3-18 30-6-6z" fill="#6b5a4e" />

    {/* bronze head, rear */}
    <path d="M748 288l35 17-5 8-20 20-26-15z" fill="#4e3d33" />
    <path d="M773 309l11 14-2 14-10 12-15-21z" fill="#744621" />
    <path d="M785 333q14 10 27 0l-2 14-8 21-30-2 2-20z" fill="#70421c" />
    <path d="M786 336q13 12 25 1M776 350q8-4 14 3t12 4" stroke="#2f190b" strokeWidth="3" fill="none" />
    <path d="M788 300l18 6 4 25-20-2-7-12z" fill="#262624" />
    <path d="M784 310l4-7M786 316l6-11M788 322l9-16M792 326l9-16" stroke="#5c5b57" strokeWidth="1" />
    <ellipse cx="805" cy="320" rx="10.500" ry="13.500" transform="rotate(14 805 320)" fill="#3b3b39" stroke="#7c7b76" strokeWidth="1" />
    <circle cx="804" cy="320" r="2" fill="#151515" />

    {/* timing cover */}
    <path d="M620 428l34 4 32-30 56-24 30 59-8 27-12 28-64 16z" fill="url(#bronze)" />
    <path d="M686 393l34 8 26-20 4 12-31 19-33-8z" fill="#8a5a30" />
    <path d="M686 396l33 8 29-20" stroke="#3a1e0b" strokeWidth="2" fill="none" />
    <path d="M740 378l4-30-26 28-2 20z" fill="#4e331e" />
    <path d="M686 410l32 6 26-12 4 30-30-16-32 4z" fill="#57331b" />
    <path d="M620 428l36 54 30 25" stroke="#3b210e" strokeWidth="2" fill="none" />

    {/* crank pulley */}
    <path d="M693 487l-6 14q0 20 12 25l12 4 6-38z" fill="#21211f" />
    <ellipse cx="725" cy="497" rx="27" ry="35" transform="rotate(16 725 497)" fill="#42423f" stroke="#5e5e5a" strokeWidth=".8" />
    <ellipse cx="725" cy="499" rx="11" ry="13" transform="rotate(16 725 499)" fill="#23221f" />
    <path d="M716 506q12 3 20-13" stroke="#5a5955" strokeWidth="3" fill="none" />

    {/* intake runners */}
    <path d="M590 234q2-16 12-24l8 0q6 2 5 12l1 38-14-10z" fill="url(#runner)" stroke="#9b968d" strokeWidth=".7" />
    <path d="M613 216q-3 20 2 44" stroke="#a8a399" strokeWidth="2" fill="none" />
    <path d="M627 274q8-22 24-30 12-4 21 3l-4 12-14 30z" fill="url(#runner)" stroke="#8f8a81" strokeWidth=".7" />
    <path d="M668 250q-8 16-15 36" stroke="#9d988e" strokeWidth="2.500" fill="none" />
    <path d="M657 296q22-18 48-22 16-1 23 5-2 8-18 22l-33 24z" fill="url(#runner)" stroke="#8f8a81" strokeWidth=".7" />
    <path d="M668 303q22-8 46-22l-10 22-27 21z" fill="#38332e" />
    <path d="M497 300q6-12 18-15l36-8 27 16-10 14-45 5q-12 2-14 8-10-4-12-20z" fill="#46423c" />
    <path d="M517 296q14-4 52-6" stroke="#6d685f" strokeWidth="2" fill="none" />
    <path d="M497 300q6-12 18-15l5 8q-8 6-10 22-10-4-13-15z" fill="#524d46" />
    <path d="M552 328q10-26 28-31l28 14-14 14q-14 4-22 16z" fill="url(#runner)" stroke="#a19b8f" strokeWidth=".7" />
    <path d="M570 340q6-18 34-26l6 10q-20 4-28 24z" fill="#3f3b36" />
    <path d="M576 318q14 2 26-8" stroke="#b0aa9d" strokeWidth="2.500" fill="none" />
    <path d="M610 313l20 12q8 12 8 28l-4 22-24-14q4-24 0-48z" fill="url(#runner)" stroke="#a19b8f" strokeWidth=".7" />
    <path d="M632 334q6 18 0 36l-14-5 4-26z" fill="#7d776c" />
    <path d="M545 274l10-18 18 6-4 14z" fill="#4c4842" />
    <path d="M547 275l28-19 60 18 44 31-1 18-10 3-50-10z" fill="#676259" stroke="#857f75" strokeWidth=".8" />
    <path d="M547 275l72 41 30 8-2 7-35-10-66-40z" fill="#3f3b35" />
    <path d="M660 315l18-10v18l-8 2z" fill="#47433d" />

    {/* hose to the rear turbo */}
    <path d="M666 322q30-3 57-3 22 2 35 14 14 14 18 47-16 9-34 0-1-18-6-26-12-9-34-7l-34 3z" fill="#262627" />
    <path d="M676 326q40-5 58 0 20 6 30 34" stroke="#2f2f31" strokeWidth="4" fill="none" />

    {/* exhaust manifold */}
    <path d="M321 356l60 24 60 40 56 32 24 4 28-12 4 4q-16 12-34 16-16 2-34-6L321 368z" fill="#7f4b22" />
    <path d="M321 368l164 88q22 8 38 6" stroke="#5b3213" strokeWidth="1.500" fill="none" />
    <path d="M337 337q-13 0-16 19l66 32 58 38q36 22 60 26 20 2 42-14l-12-16-20 8-26-12-28-22-34-12-14-8z" fill="url(#tube)" />
    <path d="M337 337l76 40q4-6 6-18l18 8q4 14-4 24l-22 12-30-8z" fill="#64645f" />
    <path d="M340 347l52 27" stroke="#b4b5a6" strokeWidth="4" opacity=".7" />
    <path d="M326 344q8-6 14-2M384 386l26 12M392 382q18 12 32 4M395 392q20 8 32-4" stroke="#2b2a29" strokeWidth="1.500" fill="none" />
    <path d="M398 379l6-4 3 3-6 4z" fill="#e8e8e8" />
    <path d="M457 391l22 12-4 14-18-8z" fill="#4c4f60" />
    <path d="M437 389q3-7 10-3l10 5v18l-18-9q-4-5-2-11z" fill="#fff" />
    <path d="M470 404l16 6q2 14-10 22l-22 3-14-8q24-4 30-23z" fill="#6b6964" />
    <path d="M444 428q24 8 36-8M448 434q24 4 36-12" stroke="#28221e" strokeWidth="1.500" fill="none" />
    <path d="M420 372l18 8-4 14-8 8-10 0q8-10 4-30zM484 408l14 6-4 12-14 4q6-8 4-22z" fill="#533319" />
    <path d="M492 418l38 16-14 10-20-4q-6-8-4-22z" fill="#414552" />
    <path d="M528 434l12 8q-6 12-30 16l-16-6q26 0 34-18z" fill="#6e6d69" />
    <path d="M340 362l64 32 62 40q32 20 52 22" stroke="#2d3033" strokeWidth="2" fill="none" />
    <path d="M404 401l36 22M466 440l34 14M504 442q14 2 22-6" stroke="#a9a9a3" strokeWidth="1.500" fill="none" opacity=".6" />

    {/* front bank valve cover */}
    <path d="M475 290l4-2 158 92 12 14-12 30-24 51-18-12-190-104 0-4z" fill="#24211e" />
    <path d="M620 396l14 12-20 67-24-14z" fill="#56534b" />
    <path d="M608 450l18-20 4 14-17 31-18-11z" fill="#7b6b5e" stroke="#241f1b" strokeWidth="1" />
    <path d="M438 273l39 21-1 12 5 6 12-10 7 3q0 10-4 12l16 10q12-4 20-8l4 2 1 14 12-12 9 6-1 10 17 10 20 1 24 27-14 18-22 40-9 20L405 354l-10-5 2-14-5-7 26-46 8 1q6-2 7-8z" fill="url(#cover)" stroke="#837d76" strokeWidth=".8" />
    <path d="M595 459l28-62-9-6-27 47-22 8z" fill="#4d544c" opacity=".8" />
    <g fill="#1c1815" stroke="#8a847b" strokeWidth=".8">
      <path d="M449 282l24 13q-4 14-16 15-12-2-11-16z" />
      <path d="M478 299l15 8q-3 6-9 6-8-2-6-14z" />
      <path d="M506 314l24 13q-4 14-15 15-13-3-12-17z" />
      <path d="M541 335l13 7q-2 6-8 6-7-2-5-13z" />
      <path d="M562 347l23 12q-4 14-15 15-12-3-11-16z" />
      <path d="M611 380l21 12q-3 5-9 4-12-4-12-16z" />
    </g>
    <path d="M448 300q8 6 18 2M505 332q8 6 18 2M561 364q8 6 16 2" stroke="#6b5a4c" strokeWidth="3" fill="none" />
    <path d="M417 362q0-14 9-12 6 4 3 18zM531 425q0-12 8-11 6 4 3 18zM571 446q10-10 20-4 8 5 2 18z" fill="#2a1d15" />
    <path d="M405 358l192 104 16 13" stroke="#6c665f" strokeWidth="1" fill="none" />
    <path d="M475 290l158 92" stroke="#15130f" strokeWidth="3" />
    <path d="M392 328l4-7M395 349l22 12" stroke="#96908a" strokeWidth="1" />

    {/* camshaft pulley */}
    <path d="M630 391q-10 6-8 24l14 14 12-8V394z" fill="#2c2b29" />
    <path d="M626 399l14-4M624 405l14-4M623 411l13-3M625 417l12-3M628 422l10-2" stroke="#55534f" strokeWidth="1" />
    <ellipse cx="644" cy="411" rx="10" ry="15" transform="rotate(14 644 411)" fill="#383836" stroke="#8b8a84" strokeWidth=".8" />
    <circle cx="645" cy="410" r="2" fill="#171717" />

    {/* turbos and filters, rear then front */}
    <g transform="translate(89 -49)"><Turbo /><AirFilter /></g>
    <Turbo />
    <AirFilter />

    {/* main hose */}
    <path
      fillRule="evenodd"
      d="M545 278Q520 267 507 251Q484 224 482 203Q481 190 488 184Q499 175 517 180Q560 195 603 240Q636 268 662 313Q681 348 686 378L687 430Q670 438 653 430L652 402Q644 356 612 314Q585 276 566 255L561 262ZM513 210Q518 224 537 241L560 252V247Q536 218 513 210Z"
      fill="url(#hose)"
    />
    <path d="M520 190Q576 214 616 266Q664 330 668 384" stroke="#2b2b2b" strokeWidth="6" fill="none" opacity=".6" />
  </g>
);

const Triad = () => (
  <g strokeWidth="2.200" fontFamily="Liberation Serif, serif" fontSize="8">
    <path d="M187 593v-12" stroke="#176b24" />
    <path d="M184 583l3-8 3 8z" fill="#176b24" />
    <path d="M187 593l10 5" stroke="#a8242a" />
    <path d="M195 593l9 8-9-1z" fill="#c32b2b" />
    <path d="M187 593l-10 5" stroke="#2430a8" />
    <path d="M178 594l-9 7 10-1z" fill="#2633c4" />
    <text x="184" y="576" fill="#222">Y</text>
    <text x="199" y="604" fill="#c32b2b">X</text>
    <text x="170" y="604" fill="#2633c4">Z</text>
  </g>
);

const menuTools = ['newDoc', 'open', 'save', 'print', 'undo'];
const viewTools: [string, boolean][] = [
  ['zoomFit', false], ['zoomArea', false], ['prevView', false], ['section', false], ['dynView', false], ['orient', true],
  ['style', true], ['eye', true], ['appearance', false], ['scene', true], ['monitor', true],
];
const ribbonTabs = ['Сборка', 'Расположение', 'Эскиз', 'Анализировать', 'Добавления SOLIDWORKS', 'SOLIDWORKS MBD'];

const Chevron = ({ d }: { d: string }) => (
  <svg width="7" height="7" viewBox="0 0 8 8" aria-hidden="true">
    <path d={d} fill="none" stroke="#555" strokeWidth="1.300" />
  </svg>
);

export default function App() {
  return (
    <Frame>
      <Global />
      <TitleBar>
        <Brand>
          <svg width="20" height="17" viewBox="0 0 20 17" aria-hidden="true">
            <path d="M4 1.500h5q3 1 .5 4Q7 8 4.500 8.500M9 7q2.500 1 .5 4-3 4-8 4.500L5.500 9" fill="none" stroke="#d22a26" strokeWidth="1.300" />
            <path d="M18.500 3.500q-5.500-2-6.500 1 0 2 3 3.500 3 3-.5 5.500-2 1-5 .5" fill="none" stroke="#d22a26" strokeWidth="1.900" />
          </svg>
          <span><b>SOLID</b>WORKS</span>
        </Brand>
        <BrandArrow aria-label="Меню">
          <svg width="5" height="8" viewBox="0 0 5 8"><path d="M0 0l5 4-5 4z" fill="#555" /></svg>
        </BrandArrow>
        <QuickAccess>
          {menuTools.map((n) => (
            <React.Fragment key={n}>
              <ToolButton aria-label={n}><Icon name={n} /></ToolButton>
              <Caret />
            </React.Fragment>
          ))}
          <SelectGroup>
            <ToolButton $w={16} $active aria-label="Выбрать"><Icon name="cursor" /></ToolButton>
            <Caret $w={7} />
          </SelectGroup>
          <ToolButton aria-label="Перестроить"><Icon name="lights" /></ToolButton>
          <ToolButton $w={19} aria-label="Свойства"><Icon name="list" /></ToolButton>
          <ToolButton $w={12} aria-label="Параметры"><Icon name="gear" /></ToolButton>
          <Caret />
        </QuickAccess>
        <DocTitle>Сборка двигателя *</DocTitle>
        <SearchBox>
          <Icon name="help" />
          <input aria-label="Поиск в Справке" placeholder="Поиск в Справке по SOLIDWORKS" />
          <Icon name="search" />
          <Caret $w={8} />
        </SearchBox>
        <WindowButtons>
          <ToolButton $w={16} aria-label="Справка"><Icon name="question" size={10} /></ToolButton>
          <Caret $w={8} />
          <ToolButton $w={17} aria-label="Свернуть"><Icon name="min" /></ToolButton>
          <ToolButton $w={17} aria-label="Восстановить"><Icon name="restore" /></ToolButton>
          <ToolButton $w={16} aria-label="Закрыть"><Icon name="close" size={11} /></ToolButton>
        </WindowButtons>
      </TitleBar>

      <Ribbon>
        {commands.map((c) => (
          <React.Fragment key={c.label}>
            <Command $w={c.w} $on={c.on} $off={c.off} disabled={c.off}>
              <Icon name={c.icon} size={13} />
              {c.label}
              {c.menu && <CommandCaret />}
            </Command>
            {c.end && <Divider />}
          </React.Fragment>
        ))}
      </Ribbon>

      <TabRow>
        {ribbonTabs.map((t, i) => <RibbonTab key={t} $active={i === 0}>{t}</RibbonTab>)}
        <ViewTools>
          {viewTools.map(([n, menu]) => (
            <React.Fragment key={n}>
              <ToolButton $w={16} aria-label={n}><Icon name={n} size={13} /></ToolButton>
              {menu && <Caret $pale />}
            </React.Fragment>
          ))}
        </ViewTools>
        <DocButtons>
          <ToolButton $w={16} aria-label="Влево"><Icon name="dockL" size={10} /></ToolButton>
          <ToolButton $w={16} aria-label="Вправо"><Icon name="dockR" size={10} /></ToolButton>
          <ToolButton $w={16} aria-label="Свернуть документ"><Icon name="min" size={10} /></ToolButton>
          <ToolButton $w={16} aria-label="Восстановить документ"><Icon name="restore" size={10} /></ToolButton>
          <ToolButton $w={16} aria-label="Закрыть документ"><Icon name="close" size={10} /></ToolButton>
        </DocButtons>
      </TabRow>

      <Body>
        <Side>
          <Grip />
          <PaneTabs>
            {['tree', 'propList', 'config', 'target', 'ball'].map((n, i) => (
              <PaneTab key={n} $active={i === 0} aria-label={n}><Icon name={n} /></PaneTab>
            ))}
            <PaneMore aria-label="Ещё"><Chevron d="M2 0l4 4-4 4" /></PaneMore>
          </PaneTabs>
          <FilterBar><Icon name="funnel" /><Caret $w={4} /></FilterBar>
          <TreeArea>
            <Tree>
              {rows.map((r) => (
                <Node key={r.t} $depth={r.d ?? 0}>
                  {r.leaf ? <NoToggle /> : <Toggle $open={r.open} aria-label="Развернуть" />}
                  <Icon name={r.i ?? 'part'} />
                  <NodeText>{r.t}</NodeText>
                </Node>
              ))}
            </Tree>
            <VScroll>
              <ScrollButton aria-label="Вверх"><Chevron d="M0 6l4-4 4 4" /></ScrollButton>
              <VTrack />
              <ScrollButton aria-label="Вниз"><Chevron d="M0 2l4 4 4-4" /></ScrollButton>
            </VScroll>
          </TreeArea>
          <HScroll>
            <ScrollButton aria-label="Влево"><Chevron d="M6 0L2 4l4 4" /></ScrollButton>
            <HTrack />
            <ScrollButton aria-label="Вправо"><Chevron d="M2 0l4 4-4 4" /></ScrollButton>
          </HScroll>
          <Collapse aria-label="Скрыть панель" />
        </Side>

        <Viewport>
          <Scene viewBox="162 88 1037 540" preserveAspectRatio="xMidYMid meet">
            <Engine />
            <Triad />
            <path d="M1051 477v10.500l2.500-2.300 1.800 3.800 1.500-.7-1.700-3.600h3.300z" fill="#fff" stroke="#222" strokeWidth=".8" />
          </Scene>
          <TaskPane>
            {['house', 'library', 'folderOpen', 'palette', 'ball', 'propList', 'forum'].map((n) => (
              <TaskButton key={n} $active={n === 'ball'} aria-label={n}><Icon name={n} /></TaskButton>
            ))}
          </TaskPane>
          <ViewName>*Изометрия</ViewName>
        </Viewport>
      </Body>

      <SheetRow>
        {['M6 0L2 4l4 4M1 0v8', 'M6 0L2 4l4 4', 'M2 0l4 4-4 4', 'M2 0l4 4-4 4M7 0v8'].map((d) => (
          <SheetNav key={d} aria-label="Лист">
            <svg width="5" height="5" viewBox="0 0 8 8"><path d={d} fill="none" stroke="#999" strokeWidth="1.300" /></svg>
          </SheetNav>
        ))}
        <SheetTab $active>Модель</SheetTab>
        <SheetTab>Трехмерные виды</SheetTab>
        <SheetTab>Анимация1</SheetTab>
      </SheetRow>
      <StatusBar>
        <StatusCell $w={200}>SOLIDWORKS Premium 2016 x64 Edition</StatusCell>
        <StatusCell $w={80}>Недоопределенный</StatusCell>
        <StatusCell $w={89}>Редактируется Сборка</StatusCell>
        <StatusCell $w={31}><Icon name="lights" size={10} /></StatusCell>
        <StatusCell $w={46}>Настройка</StatusCell>
        <StatusCell $w={46}>
          <svg width="4" height="3" viewBox="0 0 4 3"><path d="M0 3l2-3 2 3z" fill="#555" /></svg>
        </StatusCell>
        <StatusCell $w={11}><Icon name="tag" size={11} /></StatusCell>
      </StatusBar>
    </Frame>
  );
}
